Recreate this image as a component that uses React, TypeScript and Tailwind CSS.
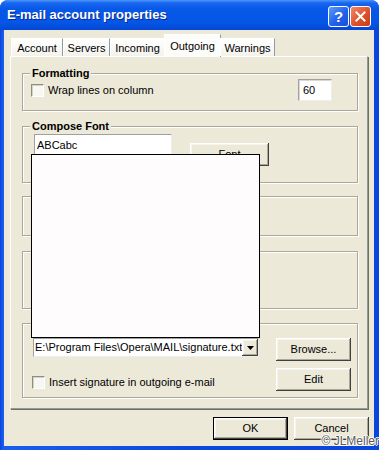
import React from "react";

const btn3d =
  "bg-[#ece9d8] shadow-[inset_-1px_-1px_#404040,inset_1px_1px_#ffffff,inset_-2px_-2px_#aca899,inset_2px_2px_#f5f4ee] flex items-center justify-center";

function CheckBox() {
  return (
    <span className="w-[13px] h-[13px] shrink-0 bg-[#f7f7f4] border border-t-[#8f8d80] border-l-[#8f8d80] border-r-white border-b-white shadow-[inset_1px_1px_#d6d3c6]" />
  );
}

function Group({ className, label, children }: { className: string; label?: string; children?: React.ReactNode }) {
  return (
    <div className={`relative border border-[#aca899] shadow-[inset_1px_1px_0_#fff,1px_1px_0_#fff] ${className}`}>
      {label && (
        <span className="absolute -top-[8px] left-[7px] px-[2px] bg-[#ece9d8] font-bold leading-[14px]">{label}</span>
      )}
      {children}
    </div>
  );
}

export default function App() {
  const tabs = [
    { name: "Account", w: "w-[52px]" },
    { name: "Servers", w: "w-[47px]" },
    { name: "Incoming", w: "w-[55px]" },
    { name: "Outgoing", w: "w-[57px]", active: true },
    { name: "Warnings", w: "w-[55px]" },
  ];
  return (
    <div className="w-[379px] h-[450px] bg-white">
      <div className="relative w-[379px] h-[450px] rounded-t-[8px] overflow-hidden bg-[linear-gradient(90deg,#0a45dc,#1a5cf0_3px,#0a48e0_50%,#0a45dc)] flex flex-col font-['Liberation_Sans',Arial,sans-serif] text-[11px] text-black">
        {/* title bar */}
        <div className="h-[30px] shrink-0 flex items-center pl-[7px] pr-[8px] bg-[linear-gradient(180deg,#4c96fb_0%,#1866ef_10%,#0858e8_30%,#0556e6_75%,#0447d4_100%)]">
          <span className="text-white font-bold text-[13px] [text-shadow:1px_1px_#0a2a8c]">E-mail account properties</span>
          <div className="ml-auto flex gap-[1px] mt-[2px]">
            <div className="w-[21px] h-[21px] rounded-[3px] border border-white bg-[linear-gradient(135deg,#5b9cff,#2360ea_55%,#1a4fd6)] flex items-center justify-center text-white font-bold text-[15px] leading-none">?</div>
            <div className="w-[21px] h-[21px] rounded-[3px] border border-white bg-[linear-gradient(135deg,#ef8a66,#e0502a_55%,#c83d16)] flex items-center justify-center">
              <svg width="11" height="11" viewBox="0 0 11 11">
                <path d="M1.5 1.5 L9.5 9.5 M9.5 1.5 L1.5 9.5" stroke="#fff" strokeWidth="2" strokeLinecap="square" />
              </svg>
            </div>
          </div>
        </div>

        {/* client area */}
        <div className="flex-1 ml-[4px] mr-[5px] mb-[4px] bg-[#ece9d8] flex flex-col">
          {/* tabs */}
          <div className="h-[26px] pl-[7px] flex items-end relative z-10">
            {tabs.map((t) =>
              t.active ? (
                <div
                  key={t.name}
                  className={`${t.w} h-[23px] -mb-[1px] -mx-[1px] bg-[#fcfcfa] border border-b-0 border-t-white border-l-white border-r-[#919b9c] flex items-start justify-center pt-[3px]`}
                >
                  {t.name}
                </div>
              ) : (
                <div
                  key={t.name}
                  className={`${t.w} h-[18px] bg-[linear-gradient(180deg,#ffffff,#f3f2ec)] border border-b-0 border-t-white border-l-white border-r-[#919b9c] flex items-center justify-center pt-[1px]`}
                >
                  {t.name}
                </div>
              )
            )}
          </div>

          {/* tab page */}
          <div className="h-[353px] mx-[6px] border border-t-white border-l-white border-r-[#919b9c] border-b-[#919b9c] shadow-[1px_1px_0_#716f64] pl-[11px] pr-[9px] flex flex-col">
            <Group label="Formatting" className="mt-[16px] h-[38px]">
              <div className="mt-[5px] pl-[8px] pr-[25px] h-[22px] flex items-center">
                <CheckBox />
                <span className="ml-[4px]">Wrap lines on column</span>
                <div className="ml-auto w-[34px] h-[22px] bg-white border border-t-[#a0a0a0] border-l-[#a0a0a0] border-r-[#eeeeee] border-b-[#eeeeee] shadow-[inset_1px_1px_#d8d8d8] flex items-center pl-[4px] pt-[1px]">
                  60
                </div>
              </div>
            </Group>

            <Group label="Compose Font" className="mt-[15px] h-[57px]">
              <div className="pl-[11px] pt-[7px] flex items-start">
                <div className="w-[138px] h-[22px] bg-white border border-t-[#a0a0a0] border-l-[#a0a0a0] border-r-[#eeeeee] border-b-[#eeeeee] pl-[2px] pt-[2px]">
                  ABCabc
                </div>
                <div className={`${btn3d} ml-[18px] mt-[9px] w-[79px] h-[23px]`}>Font</div>
              </div>
            </Group>

            <Group className="mt-[13px] h-[40px]" />
            <Group className="mt-[15px] h-[58px]" />

            <Group className="mt-[14px] h-[75px]">
              <div className="pt-[14px] pl-[10px] pr-[6px] flex">
                <div className="flex flex-col">
                  <div className="w-[226px] h-[19px] bg-white border border-t-[#a0a0a0] border-l-[#a0a0a0] border-r-[#eeeeee] border-b-[#eeeeee] flex items-center">
                    <span className="pl-[1px] flex-1 whitespace-nowrap overflow-hidden">E:\Program Files\Opera\MAIL\signature.txt</span>
                    <div className={`${btn3d} w-[16px] h-[17px] shrink-0`}>
                      <svg width="7" height="4" viewBox="0 0 7 4">
                        <path d="M0 0 H7 L3.5 4 Z" fill="#000" />
                      </svg>
                    </div>
                  </div>
                  <div className="mt-[17px] flex items-center -ml-[1px]">
                    <CheckBox />
                    <span className="ml-[4px]">Insert signature in outgoing e-mail</span>
                  </div>
                </div>
                <div className="ml-auto flex flex-col gap-[7px]">
                  <div className={`${btn3d} w-[75px] h-[23px]`}>Browse...</div>
                  <div className={`${btn3d} w-[75px] h-[23px]`}>Edit</div>
                </div>
              </div>
            </Group>
          </div>

          {/* bottom buttons */}
          <div className="mt-[8px] pr-[5px] flex justify-end gap-[6px]">
            <div className={`${btn3d} w-[75px] h-[23px] border border-black`}>OK</div>
            <div className={`${btn3d} w-[75px] h-[23px]`}>Cancel</div>
          </div>
        </div>

        {/* open drop-down list of the combo box */}
        <div className="absolute left-[31px] top-[154px] w-[229px] h-[184px] bg-[#fefcfc] border border-black" />

        <span className="absolute right-[0px] bottom-[2px] text-[12px] leading-[13px] text-[#5a5a5a] [text-shadow:1px_0_#fff,-1px_0_#fff,0_1px_#fff,0_-1px_#fff]">© JLMeller</span>
      </div>
    </div>
  );
}
